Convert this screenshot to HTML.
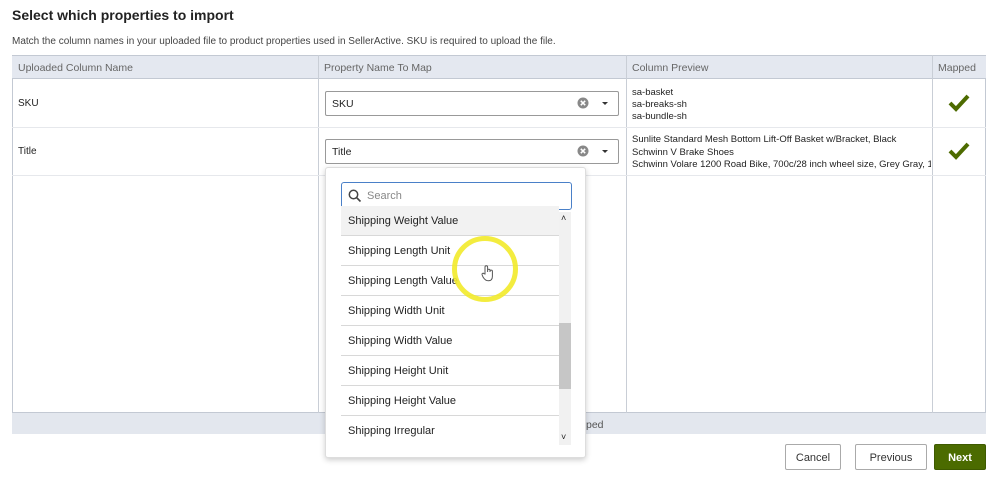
<!DOCTYPE html>
<html><head><style>
*{box-sizing:border-box;margin:0;padding:0}
body{width:1002px;height:482px;background:#fff;font-family:"Liberation Sans",sans-serif;position:relative;overflow:hidden;color:#222}
.a{position:absolute}
h1{position:absolute;left:12px;top:7px;font-size:14px;font-weight:bold;color:#222}
.sub{left:12px;top:36px;font-size:10px;color:#444}
.th{background:#e4e8f0;top:55px;height:24px;border-top:1px solid #c3c9d3;border-bottom:1px solid #c3c9d3;font-size:10.5px;color:#666;padding:6px 6px}
.vl{width:1px;background:#c9ced6}
.hl{height:1px;background:#e6e8ec}
.cell{font-size:10px;color:#222}
.sel{border:1px solid #999;border-radius:2px;height:25px;background:#fff;font-size:10.5px;padding:6px 6px}
.btn{border:1px solid #aaa;border-radius:2px;background:#fff;font-size:11px;text-align:center;padding-top:7px;height:26px;color:#333}
.dd{left:325px;top:167px;width:261px;height:291px;background:#fff;border:1px solid #ddd;border-radius:3px;box-shadow:0 2px 6px rgba(0,0,0,.2)}
.it{position:absolute;left:15px;width:218px;height:30px;border-bottom:1px solid #d8d8d8;font-size:11px;padding-left:7px;line-height:30px;color:#222}
</style></head><body>
<h1>Select which properties to import</h1>
<div class="a sub">Match the column names in your uploaded file to product properties used in SellerActive. SKU is required to upload the file.</div>
<div class="a" style="left:12px;top:55px;width:974px;height:358px;border:1px solid #c3c9d3"></div>
<div class="a th" style="left:12px;width:306px">Uploaded Column Name</div>
<div class="a th" style="left:318px;width:308px">Property Name To Map</div>
<div class="a th" style="left:626px;width:306px">Column Preview</div>
<div class="a th" style="left:932px;width:54px">Mapped</div>
<div class="a vl" style="left:318px;top:55px;height:358px"></div>
<div class="a vl" style="left:626px;top:55px;height:358px"></div>
<div class="a vl" style="left:932px;top:55px;height:358px"></div>
<div class="a hl" style="left:12px;top:127px;width:974px"></div>
<div class="a hl" style="left:12px;top:175px;width:974px"></div>
<div class="a cell" style="left:18px;top:98px">SKU</div>
<div class="a cell" style="left:18px;top:146px">Title</div>
<div class="a sel" style="left:325px;top:91px;width:294px">SKU</div>
<div class="a sel" style="left:325px;top:139px;width:294px">Title</div>
<svg class="a" style="left:577px;top:97px" width="34" height="12"><circle cx="6" cy="6" r="5.5" fill="#888"/><path d="M3.8 3.8l4.4 4.4M8.2 3.8l-4.4 4.4" stroke="#fff" stroke-width="1.5"/><path d="M25 5h6l-3 3z" fill="#333"/></svg>
<svg class="a" style="left:577px;top:145px" width="34" height="12"><circle cx="6" cy="6" r="5.5" fill="#888"/><path d="M3.8 3.8l4.4 4.4M8.2 3.8l-4.4 4.4" stroke="#fff" stroke-width="1.5"/><path d="M25 5h6l-3 3z" fill="#333"/></svg>
<div class="a cell" style="left:632px;top:87px;line-height:12px;font-size:9.5px">sa-basket<br>sa-breaks-sh<br>sa-bundle-sh</div>
<div class="a cell" style="left:632px;top:134px;line-height:12.5px;font-size:9.5px;width:299px;white-space:nowrap;overflow:hidden">Sunlite Standard Mesh Bottom Lift-Off Basket w/Bracket, Black<br>Schwinn V Brake Shoes<br>Schwinn Volare 1200 Road Bike, 700c/28 inch wheel size, Grey Gray, 1</div>
<svg class="a" style="left:948px;top:94px" width="22" height="18"><path d="M2 9l6 6L20 2" stroke="#4d6b00" stroke-width="4" fill="none"/></svg>
<svg class="a" style="left:948px;top:142px" width="22" height="18"><path d="M2 9l6 6L20 2" stroke="#4d6b00" stroke-width="4" fill="none"/></svg>
<div class="a" style="left:12px;top:413px;width:974px;height:21px;background:#e3e7ee"></div>
<div class="a" style="left:586px;top:419px;font-size:10.5px;color:#555">ped</div>
<div class="a btn" style="left:785px;top:444px;width:56px">Cancel</div>
<div class="a btn" style="left:855px;top:444px;width:72px">Previous</div>
<div class="a btn" style="left:934px;top:444px;width:52px;background:#4b6b00;border-color:#3e5a00;color:#fff;font-weight:bold">Next</div>
<div class="a dd">
<div class="a" style="left:15px;top:14px;width:231px;height:28px;border:1.5px solid #4a80c8;border-radius:3px"></div>
<svg class="a" style="left:22px;top:21px" width="14" height="14"><circle cx="5.5" cy="5.5" r="4.2" stroke="#444" stroke-width="1.5" fill="none"/><path d="M8.5 8.5l4 4" stroke="#444" stroke-width="1.6"/></svg>
<div class="a" style="left:41px;top:22px;font-size:11px;color:#888">Search</div>
<div class="it" style="top:38px;background:#f2f2f2">Shipping Weight Value</div>
<div class="it" style="top:68px">Shipping Length Unit</div>
<div class="it" style="top:98px">Shipping Length Value</div>
<div class="it" style="top:128px">Shipping Width Unit</div>
<div class="it" style="top:158px">Shipping Width Value</div>
<div class="it" style="top:188px">Shipping Height Unit</div>
<div class="it" style="top:218px">Shipping Height Value</div>
<div class="it" style="top:248px;border:none">Shipping Irregular</div>
<div class="a" style="left:233px;top:44px;width:12px;height:233px;background:#f1f1f1"></div>
<div class="a" style="left:233px;top:155px;width:12px;height:66px;background:#c6c6c6"></div>
<div class="a" style="left:235px;top:45px;font-size:9px">˄</div>
<div class="a" style="left:235px;top:264px;font-size:9px">˅</div>
</div>
<div class="a" style="left:452px;top:236px;width:66px;height:66px;border:5px solid #f2ea2a;border-radius:50%;opacity:.9"></div>
<svg class="a" style="left:481px;top:264px" width="14" height="18"><path d="M4 10V3a1.3 1.3 0 0 1 2.6 0v5V6.5a1.2 1.2 0 0 1 2.4 0V8V7.3a1.2 1.2 0 0 1 2.4 0v5c0 3-1.5 4.5-4 4.5S3.5 15.5 2 13L1 10.5a1.1 1.1 0 0 1 2-.8z" fill="#fff" stroke="#555" stroke-width="1"/></svg>
</body></html>
